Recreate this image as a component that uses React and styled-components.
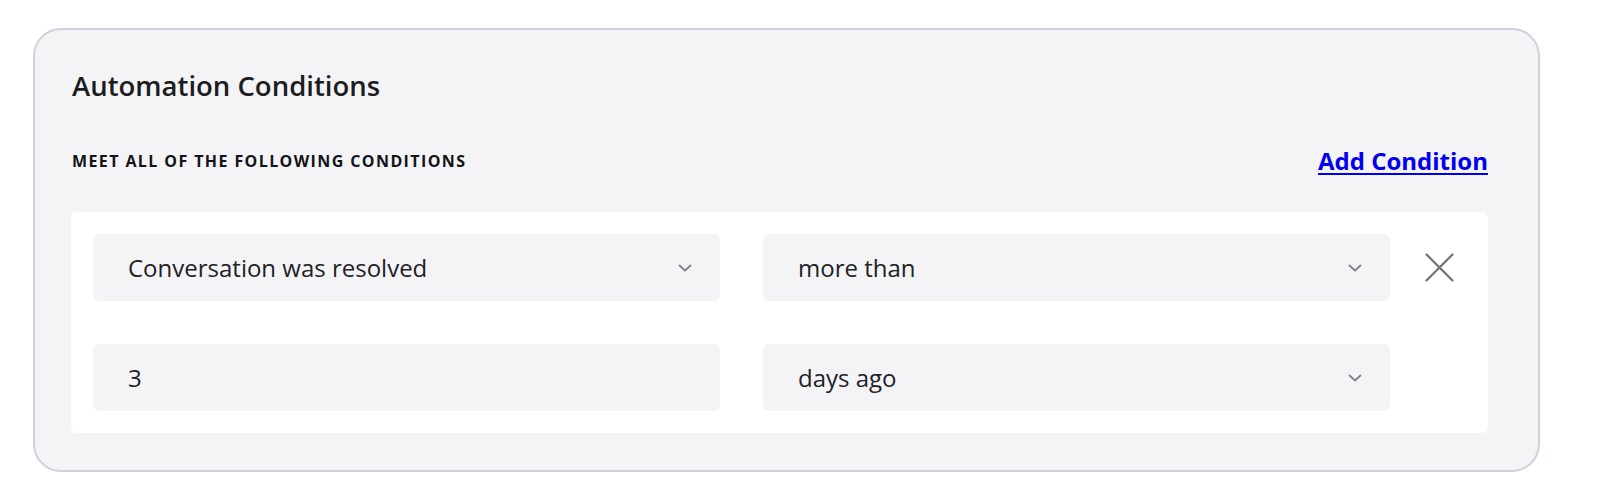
import React from "react";
import styled, { createGlobalStyle } from "styled-components";

const GlobalStyle = createGlobalStyle`
  html, body {
    margin: 0;
    padding: 0;
    background: #ffffff;
  }
  body {
    font-family: "Open Sans", "Noto Sans", Arial, sans-serif;
    color: #1c1e22;
  }
`;

const Page = styled.div`
  padding: 28px 0 0 33px;
`;

const Card = styled.section`
  width: 1507px;
  box-sizing: border-box;
  border: 2px solid #cdd1da;
  border-radius: 28px;
  background: #f4f4f6;
  padding: 38px 50px 37px 36px;
`;

const Title = styled.h2`
  margin: 0 0 0 1px;
  font-size: 27.5px;
  line-height: 36px;
  font-weight: 600;
  color: #1b1d21;
`;

const Header = styled.div`
  display: flex;
  align-items: center;
  justify-content: space-between;
  margin-top: 40px;
  height: 33px;
`;

const Label = styled.span`
  margin-left: 1px;
  font-size: 16px;
  font-weight: 700;
  letter-spacing: 1.4px;
  text-transform: uppercase;
  color: #121417;
`;

const AddLink = styled.a`
  font-size: 24px;
  font-weight: 700;
  color: #0000ee;
  text-decoration: underline;
  text-decoration-thickness: 2px;
  text-underline-offset: 3px;
  cursor: pointer;
`;

const Panel = styled.div`
  margin-top: 35px;
  background: #ffffff;
  border-radius: 6px;
  padding: 22px;
  display: flex;
  flex-direction: column;
  gap: 43px;
`;

const Row = styled.div`
  display: flex;
  align-items: center;
`;

const Fields = styled.div`
  flex: 1;
  display: grid;
  grid-template-columns: 1fr 1fr;
  column-gap: 43px;
`;

const Field = styled.div`
  height: 67px;
  box-sizing: border-box;
  background: #f4f4f6;
  border-radius: 6px;
  padding: 0 28px 0 35px;
  display: flex;
  align-items: center;
  justify-content: space-between;
  font-size: 24px;
  color: #1f2126;
`;

const Chevron = styled.svg`
  width: 14px;
  height: 8px;
  flex: none;
`;

const RemoveSlot = styled.div`
  width: 76px;
  box-sizing: border-box;
  padding-left: 35px;
  display: flex;
  align-items: center;
`;

const RemoveButton = styled.button`
  border: 0;
  background: none;
  padding: 0;
  width: 29px;
  height: 29px;
  cursor: pointer;
  display: flex;
`;

const ChevronDown = () => (
  <Chevron viewBox="0 0 14 8" fill="none">
    <path d="M1.5 1.5 L7 6.5 L12.5 1.5" stroke="#7d818a" strokeWidth="1.8" strokeLinecap="round" strokeLinejoin="round" />
  </Chevron>
);

const Select = ({ value }) => (
  <Field>
    <span>{value}</span>
    <ChevronDown />
  </Field>
);

const conditions = [
  { left: "Conversation was resolved", leftSelect: true, right: "more than", remove: true },
  { left: "3", leftSelect: false, right: "days ago", remove: false },
];

export default function App() {
  return (
    <>
      <GlobalStyle />
      <Page>
        <Card>
          <Title>Automation Conditions</Title>
          <Header>
            <Label>Meet all of the following conditions</Label>
            <AddLink>Add Condition</AddLink>
          </Header>
          <Panel>
            {conditions.map((c, i) => (
              <Row key={i}>
                <Fields>
                  {c.leftSelect ? (
                    <Select value={c.left} />
                  ) : (
                    <Field>
                      <span>{c.left}</span>
                    </Field>
                  )}
                  <Select value={c.right} />
                </Fields>
                <RemoveSlot>
                  {c.remove && (
                    <RemoveButton aria-label="Remove condition">
                      <svg width="29" height="29" viewBox="0 0 29 29" fill="none">
                        <path d="M1.5 1.5 L27.5 27.5 M27.5 1.5 L1.5 27.5" stroke="#6f727a" strokeWidth="2.2" strokeLinecap="round" />
                      </svg>
                    </RemoveButton>
                  )}
                </RemoveSlot>
              </Row>
            ))}
          </Panel>
        </Card>
      </Page>
    </>
  );
}
